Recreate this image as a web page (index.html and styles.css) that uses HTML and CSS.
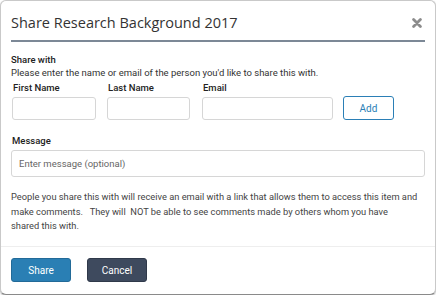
FILE: index.html
```html
<!DOCTYPE html>
<html lang="en">
<head>
  <meta charset="UTF-8" />
  <meta name="viewport" content="width=device-width, initial-scale=1.0" />
  <title>Share - Research Background 2017</title>
  <link rel="stylesheet" href="styles.css">
</head>
<body>
  <div class="modal">
    <header class="modal-header">
      <h1>Share Research Background 2017</h1>
      <button class="close-btn" aria-label="Close">
        <svg width="10" height="10" viewBox="0 0 10 10">
          <path d="M1.6 1.6 L8.4 8.4 M8.4 1.6 L1.6 8.4" stroke="#8c8c8c" stroke-width="2.8" stroke-linecap="round" />
        </svg>
      </button>
    </header>

    <form class="modal-body">
      <h2 class="section-title">Share with</h2>
      <p class="hint">Please enter the name or email of the person you'd like to share this with.</p>

      <div class="person-row">
        <label class="field first">
          <span>First Name</span>
          <input type="text" />
        </label>
        <label class="field last">
          <span>Last Name</span>
          <input type="text" />
        </label>
        <label class="field email">
          <span>Email</span>
          <input type="email" />
        </label>
        <button type="button" class="add-btn">Add</button>
      </div>

      <label class="message-field">
        <span>Message</span>
        <input type="text" placeholder="Enter message (optional)" />
      </label>

      <p class="notice">People you share this with will receive an email with a link that allows them to access this item and make comments. &nbsp; They will &nbsp;NOT be able to see comments made by others whom you have<br>shared this with.</p>
    </form>

    <footer class="modal-footer">
      <button class="btn btn-primary">Share</button>
      <button class="btn btn-dark">Cancel</button>
    </footer>
  </div>
</body>
</html>
```

FILE: styles.css
```css
body {
  margin: 0;
  font-family: Roboto, "Liberation Sans", Arial, sans-serif;
  color: #333;
  background: #fff;
}

.modal {
  box-sizing: border-box;
  width: 436px;
  height: 295px;
  border: 1px solid #c9c9c9;
  border-bottom-color: #8a8a8a;
  border-radius: 6px;
  box-shadow: 0 1px 2px rgba(0, 0, 0, 0.35);
  background: white;
  display: flex;
  flex-direction: column;
}

.modal-header {
  display: flex;
  justify-content: space-between;
  align-items: center;
  margin: 0 10px;
  padding: 11px 0 6px;
  border-bottom: 2px solid #7c8896;
}

.modal-header h1 {
  margin: 0;
  font-family: "Open Sans", Lato, sans-serif;
  font-size: 14.5px;
  font-weight: 500;
  line-height: 22px;
  color: #333;
}

.close-btn {
  background: none;
  border: none;
  padding: 0;
  margin-right: 3px;
  display: flex;
  cursor: pointer;
}

.modal-body {
  padding: 11px 10px 0;
  flex: 1;
}

.section-title {
  margin: 0;
  font-size: 9.5px;
  font-weight: 500;
  line-height: 13px;
  color: #222;
}

.hint {
  margin: 0;
  font-size: 9.5px;
  line-height: 13px;
  color: #333;
}

.person-row {
  display: flex;
  align-items: flex-end;
  margin-top: 2px;
  padding-left: 1px;
}

.field {
  display: flex;
  flex-direction: column;
}

.field span,
.message-field span {
  font-size: 9.5px;
  font-weight: 500;
  line-height: 14px;
  color: #222;
  padding-left: 1px;
  margin-bottom: 2px;
}

.field input,
.message-field input {
  box-sizing: border-box;
  height: 23px;
  border: 1px solid #d6d6d6;
  border-radius: 3px;
  padding: 0 7px;
  font-family: inherit;
  font-size: 9.5px;
  color: #333;
}

.field.first input { width: 84px; }
.field.last input { width: 83px; }
.field.email input { width: 131px; }

.field.first { margin-right: 11px; }
.field.last { margin-right: 12px; }
.field.email { margin-right: 10px; }

.add-btn {
  box-sizing: border-box;
  width: 51px;
  height: 24px;
  background: white;
  border: 1px solid #2b7fb6;
  border-radius: 3px;
  color: #2b7fb6;
  font-family: inherit;
  font-size: 10px;
  cursor: pointer;
}

.message-field {
  display: flex;
  flex-direction: column;
  margin-top: 14px;
}

.message-field input {
  width: 100%;
  height: 27px;
}

.message-field input::placeholder {
  color: #666;
}

.notice {
  margin: 13px -2px 0 0;
  font-size: 9.3px;
  line-height: 14.5px;
  color: #444;
}

.modal-footer {
  border-top: 1px solid #eee;
  padding: 11px 10px 12px;
  display: flex;
  gap: 16px;
}

.btn {
  width: 60px;
  height: 24px;
  border: none;
  border-radius: 3px;
  color: white;
  font-family: inherit;
  font-size: 10px;
  cursor: pointer;
}

.btn-primary {
  background: #2a7fb4;
  border: 1px solid #226a98;
}

.btn-dark {
  background: #3e4a5e;
  border: 1px solid #2f394a;
}
```
